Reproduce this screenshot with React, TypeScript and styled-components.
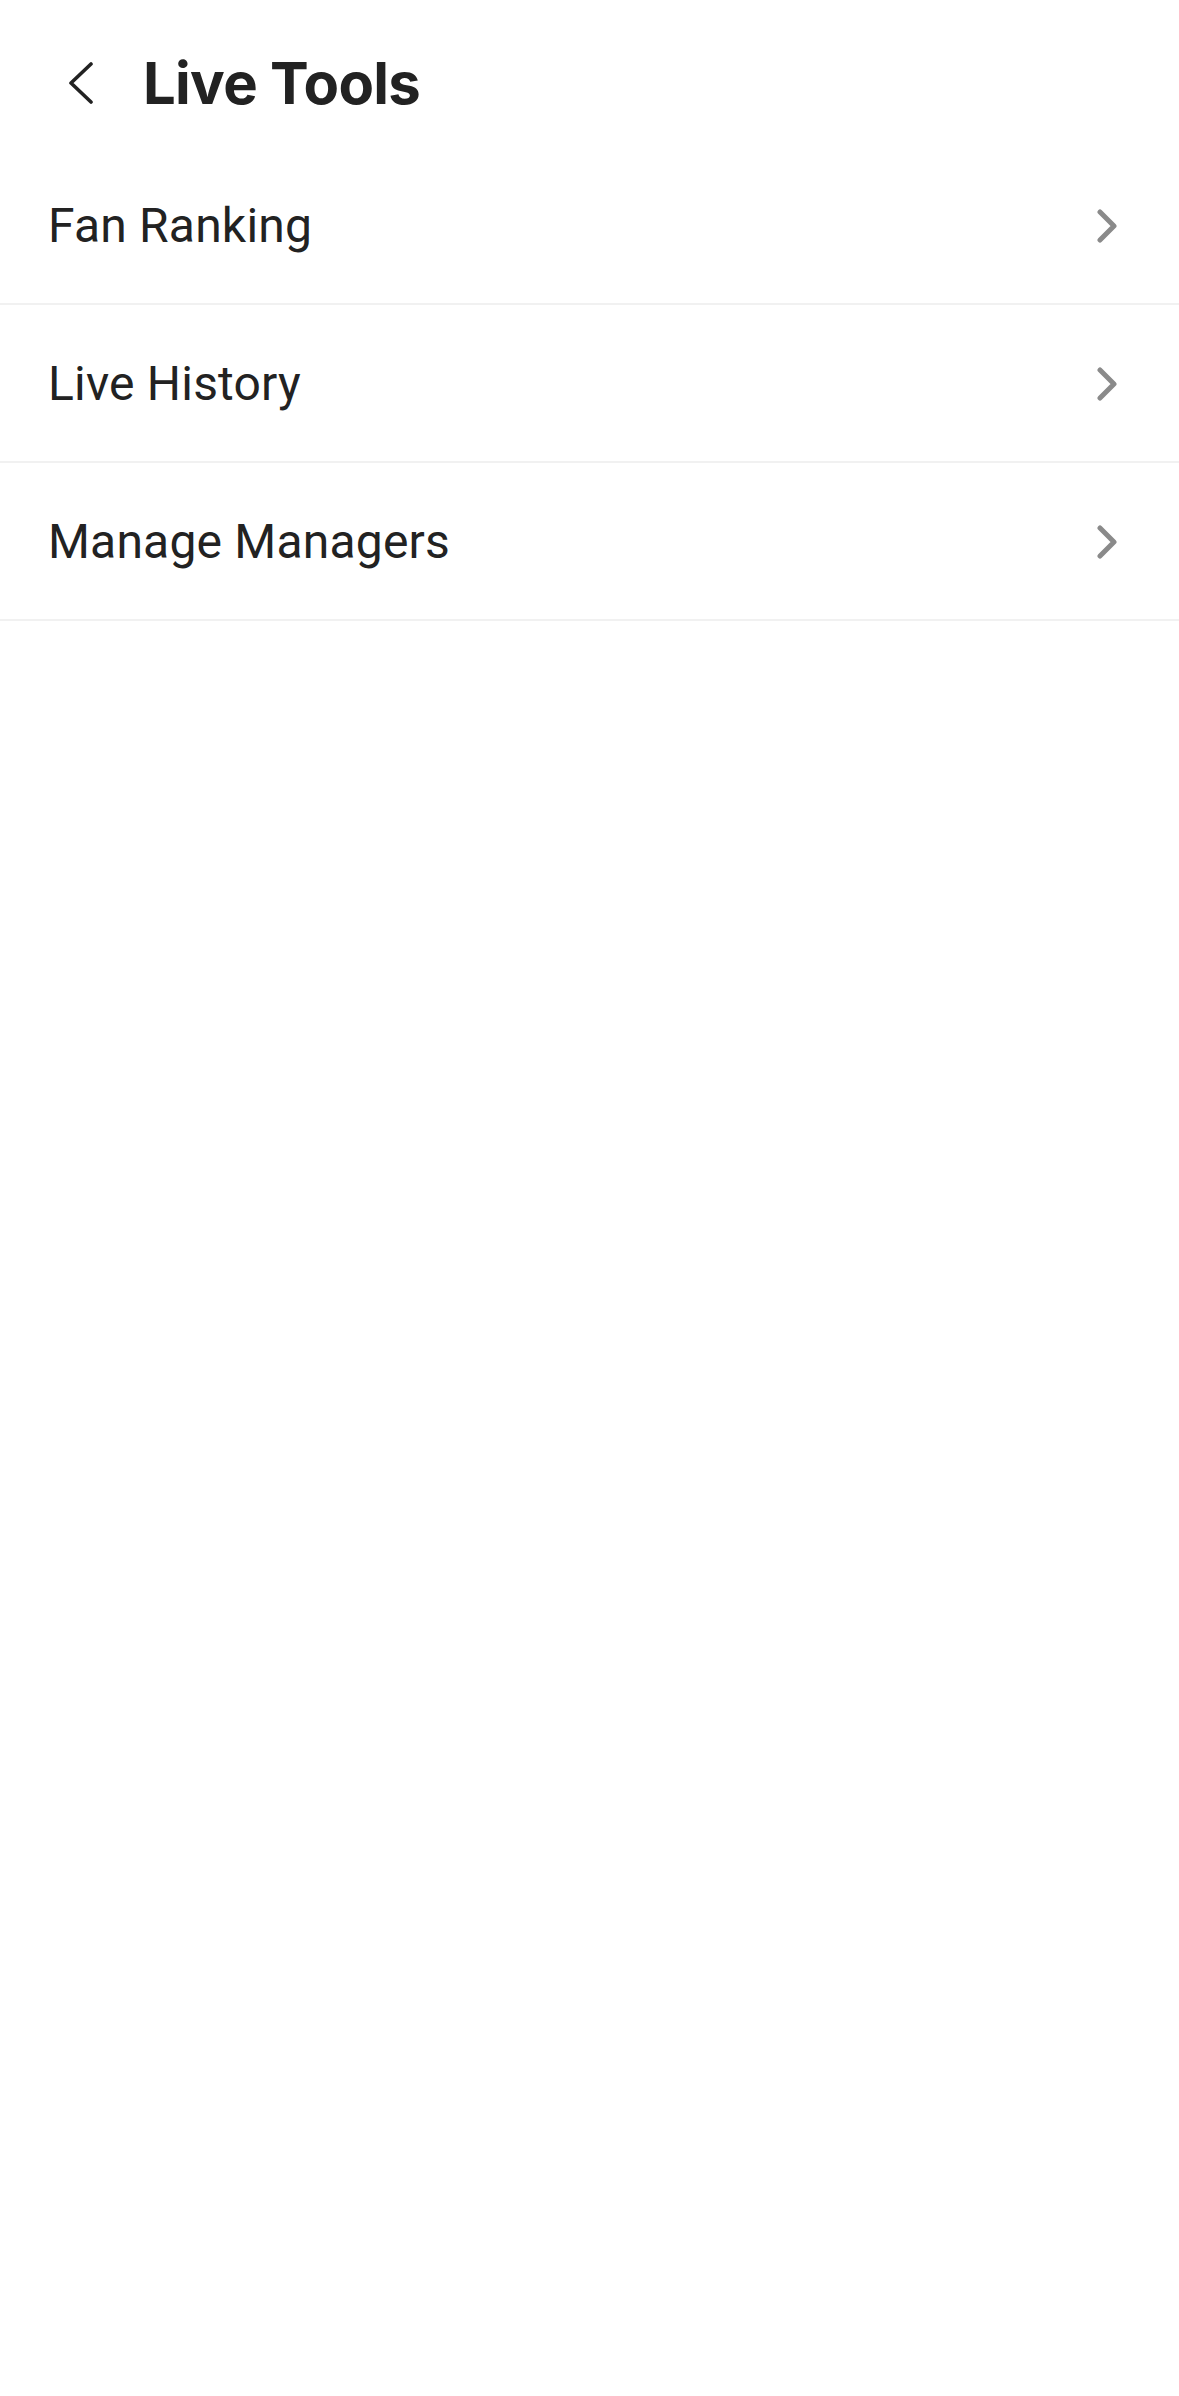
import React from "react";
import styled, { createGlobalStyle } from "styled-components";

const Global = createGlobalStyle`
  html, body { margin: 0; padding: 0; background: #ffffff; }
  #root { min-height: 2396px; background: #ffffff; }
`;

const Page = styled.div`
  width: 1179px;
  min-height: 2396px;
  background: #ffffff;
  font-family: Roboto, "Noto Sans", sans-serif;
  color: #222222;
`;

const Header = styled.header`
  box-sizing: border-box;
  height: 147px;
  padding: 19px 0 0 67px;
  display: flex;
  align-items: center;
`;

const BackButton = styled.button`
  border: 0;
  background: none;
  padding: 0;
  margin: 0 50px 0 0;
  width: 26px;
  height: 44px;
  display: flex;
  cursor: pointer;
`;

const Title = styled.h1`
  margin: 0;
  font-family: Inter, "Noto Sans", sans-serif;
  font-weight: 700;
  font-size: 58px;
  letter-spacing: -0.7px;
  line-height: 1;
  color: #222222;
`;

const List = styled.ul`
  list-style: none;
  margin: 0;
  padding: 0;
`;

const Row = styled.li`
  box-sizing: border-box;
  height: 158px;
  padding: 2px 61px 0 48px;
  display: flex;
  align-items: center;
  justify-content: space-between;
  border-bottom: 2px solid #f1f1f1;
`;

const Label = styled.span`
  font-size: 48px;
  font-weight: 400;
  letter-spacing: 0.2px;
  line-height: 1;
  color: #222222;
`;

const Chevron = () => (
  <svg width="22" height="34" viewBox="0 0 22 34" fill="none">
    <polyline
      points="4,3 18,17 4,31"
      stroke="#8a8a8a"
      strokeWidth="5"
      strokeLinecap="round"
      strokeLinejoin="round"
    />
  </svg>
);

const items = ["Fan Ranking", "Live History", "Manage Managers"];

export default function App() {
  return (
    <Page>
      <Global />
      <Header>
        <BackButton aria-label="Back">
          <svg width="26" height="44" viewBox="0 0 26 44" fill="none">
            <polyline
              points="24,3 4,22 24,41"
              stroke="#222222"
              strokeWidth="3.6"
              strokeLinecap="round"
              strokeLinejoin="round"
            />
          </svg>
        </BackButton>
        <Title>Live Tools</Title>
      </Header>
      <List>
        {items.map((t) => (
          <Row key={t}>
            <Label>{t}</Label>
            <Chevron />
          </Row>
        ))}
      </List>
    </Page>
  );
}
